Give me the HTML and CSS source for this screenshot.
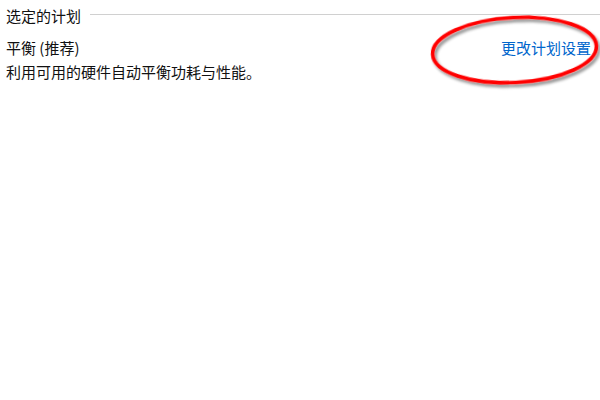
FILE: index.html
```html
<!DOCTYPE html>
<html lang="zh-CN">
<head>
<meta charset="utf-8">
<link rel="stylesheet" href="styles.css">
</head>
<body>
<div class="page">
  <div class="group-head">
    <span class="group-title">选定的计划</span>
    <span class="group-line"></span>
  </div>
  <div class="plan">
    <div class="plan-info">
      <div class="plan-name">平衡 (推荐)</div>
      <div class="plan-desc">利用可用的硬件自动平衡功耗与性能。</div>
    </div>
    <a class="plan-link" href="#">更改计划设置</a>
  </div>
  <svg class="mark" width="172" height="84" viewBox="0 0 172 84">
    <defs>
      <filter id="sh" x="-20%" y="-30%" width="140%" height="160%">
        <feGaussianBlur in="SourceAlpha" stdDeviation="1.8"/>
        <feOffset dx="2" dy="3" result="b"/>
        <feComponentTransfer><feFuncA type="linear" slope="0.45"/></feComponentTransfer>
        <feMerge><feMergeNode/><feMergeNode in="SourceGraphic"/></feMerge>
      </filter>
    </defs>
    <ellipse cx="86.5" cy="40" rx="82" ry="32.5" transform="rotate(-3 86.5 40)" fill="none" stroke="#ff0000" stroke-width="3.6" filter="url(#sh)"/>
  </svg>
</div>
</body>
</html>
```
FILE: styles.css
```css
html, body {
  margin: 0;
  padding: 0;
  background: #ffffff;
}
.page {
  position: relative;
  width: 600px;
  height: 400px;
  padding: 6px 9px 0 6px;
  box-sizing: border-box;
  font-family: "Noto Sans CJK SC", "Noto Sans", sans-serif;
  font-size: 15px;
  color: #111;
}
.group-head {
  display: flex;
  align-items: center;
  height: 20px;
  line-height: 20px;
  margin-right: -9px;
}
.group-title {
  white-space: nowrap;
}
.group-line {
  flex: 1;
  height: 1px;
  background: #d0d0d0;
  margin-left: 9px;
  margin-top: -3px;
}
.plan {
  display: flex;
  justify-content: space-between;
  align-items: flex-start;
  margin-top: 10px;
  line-height: 24px;
}
.plan-link {
  color: #0066cc;
  text-decoration: none;
}
.mark {
  position: absolute;
  left: 428px;
  top: 10px;
  overflow: visible;
}
```
